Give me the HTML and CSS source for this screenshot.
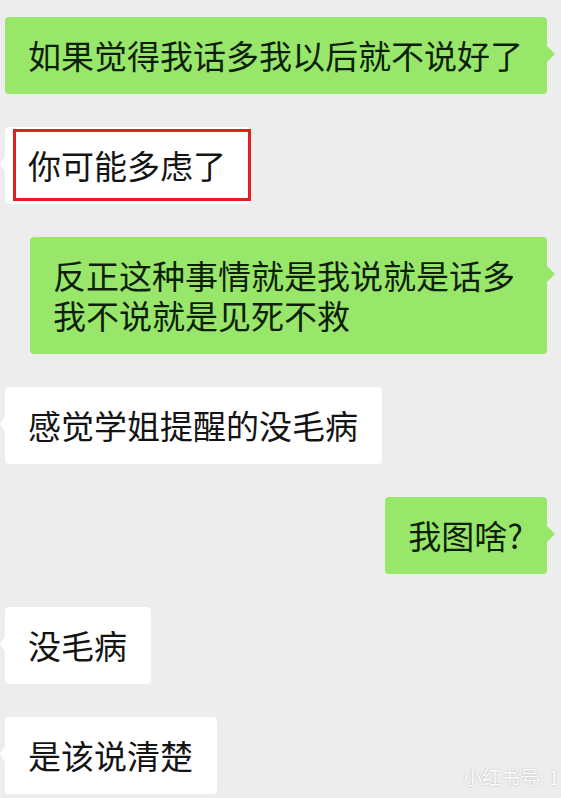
FILE: index.html
```html
<!doctype html>
<html lang="zh-CN">
<head>
    <meta charset="utf-8">
    <meta name="viewport" content="width=device-width, initial-scale=1.0">
    <title>聊天记录</title>
    <link rel="stylesheet" href="styles.css">
</head>
<body>
    <div class="chat">
        <div class="bubble me">如果觉得我话多我以后就不说好了</div>
        <div class="bubble other marked">你可能多虑了</div>
        <div class="bubble me wrap">反正这种事情就是我说就是话多我不说就是见死不救</div>
        <div class="bubble other">感觉学姐提醒的没毛病</div>
        <div class="bubble me">我图啥?</div>
        <div class="bubble other">没毛病</div>
        <div class="bubble other">是该说清楚</div>
    </div>
    <div class="watermark">小红书号: 1</div>
</body>
</html>
```

FILE: styles.css
```css
body {
    margin: 0;
    padding: 0;
    height: 798px;
    overflow: hidden;
    background-color: #ededed;
    font-family: "Noto Sans CJK SC", sans-serif;
    position: relative;
}
.chat {
    display: flex;
    flex-direction: column;
    gap: 33px;
    padding: 17px 14px 0 5px;
}
.bubble {
    position: relative;
    font-size: 33px;
    line-height: 40px;
    padding: 18px 24px 19px 23px;
    border-radius: 4px;
    color: #141414;
}
.bubble::before {
    content: "";
    position: absolute;
    top: 29px;
    border: 8px solid transparent;
}
.me {
    align-self: flex-end;
    background-color: #98e76b;
    color: #0d1f08;
}
.me::before {
    right: -16px;
    border-left-color: #98e76b;
}
.other {
    align-self: flex-start;
    background-color: #fff;
}
.other::before {
    left: -10px;
    border-width: 8px 5px;
    border-right-color: #fff;
}
.wrap {
    max-width: 470px;
}
.marked::after {
    content: "";
    position: absolute;
    top: 2px;
    right: -1px;
    bottom: 3px;
    left: 8px;
    border: 3px solid #e0201f;
}
.watermark {
    position: absolute;
    right: 2px;
    top: 763px;
    font-size: 19px;
    white-space: nowrap;
    color: #fbfbfb;
    text-shadow: 0 0 2px rgba(0, 0, 0, 0.25);
}
```
